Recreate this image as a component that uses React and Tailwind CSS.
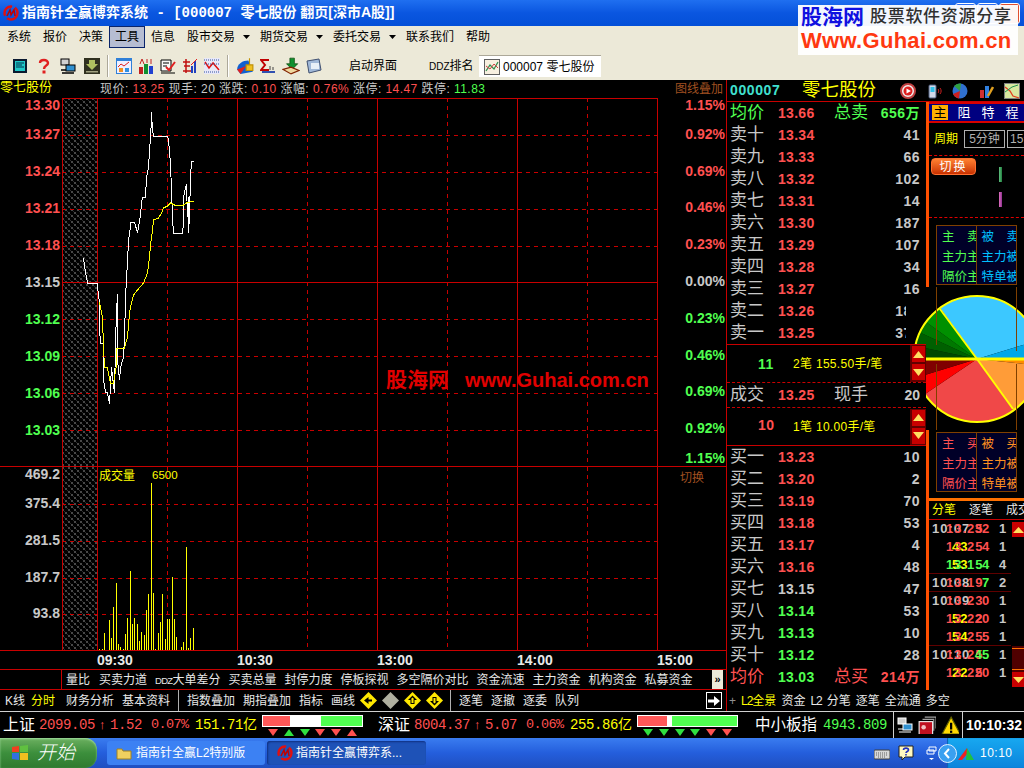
import React from 'react';

const RED = 'text-[#ff5050]';
const GREEN = 'text-[#50ff50]';
const GRAY = 'text-[#c8c8c8]';

const pricePts = [[250,505],[255,545],[260,578],[292,578],[294,625],[298,630],[298,715],[300,760],[309,760],[310,870],[315,905],[322,908],[328,942],[333,832],[338,885],[342,908],[344,760],[347,665],[350,612],[352,810],[356,870],[360,835],[368,800],[372,740],[374,630],[377,560],[381,520],[385,450],[389,410],[391,395],[403,395],[412,430],[419,375],[422,340],[425,322],[434,322],[438,265],[443,230],[447,185],[449,138],[452,90],[454,65],[457,120],[460,138],[502,138],[505,150],[508,185],[511,222],[513,300],[515,385],[518,430],[545,430],[548,400],[550,320],[555,295],[559,282],[561,380],[563,322],[565,430],[567,375],[570,265],[572,212],[578,212]];
const avgPts = [[296,635],[305,685],[310,770],[313,830],[320,835],[330,880],[340,880],[348,825],[348,775],[372,775],[380,740],[387,670],[392,640],[400,615],[410,600],[430,578],[440,550],[447,500],[450,465],[455,420],[460,390],[475,383],[482,370],[488,355],[500,348],[510,340],[522,346],[550,346],[558,338],[578,334]];
const volBars = [[298,565],[307,565],[313,516],[328,477],[334,531],[340,438],[349,366],[355,549],[361,558],[370,564],[376,519],[382,471],[391,330],[397,489],[403,471],[412,489],[418,540],[424,513],[433,522],[439,447],[445,399],[454,66],[460,396],[466,564],[475,516],[481,483],[487,399],[496,534],[502,474],[508,474],[517,348],[523,474],[529,528],[544,558],[550,543],[559,258],[565,561],[571,531],[580,501]];

const toPrice = (pts) => pts.map(([x, y]) => `${Math.round(x / 3) - 62 + 0.5},${Math.round(y / 3) + 90 - 98}`).join(' ');

const menus = [
  { t: '系统', w: 'w-[36px]' }, { t: '报价', w: 'w-[36px]' }, { t: '决策', w: 'w-[30px]' },
];
const tabs1 = ['买卖力道', 'DDZ大单差分', '买卖总量', '封停力度', '停板探视', '多空隔价对比', '资金流速', '主力资金', '机构资金', '私募资金'];
const sells = [['卖十','13.34','41'],['卖九','13.33','66'],['卖八','13.32','102'],['卖七','13.31','14'],['卖六','13.30','187'],['卖五','13.29','107'],['卖四','13.28','34'],['卖三','13.27','16'],['卖二','13.26','183'],['卖一','13.25','372']];
const buys = [['买一','13.23','10',RED],['买二','13.20','2',RED],['买三','13.19','70',RED],['买四','13.18','53',RED],['买五','13.17','4',RED],['买六','13.16','48',RED],['买七','13.15','47',GRAY],['买八','13.14','53',GREEN],['买九','13.13','10',GREEN],['买十','13.12','28',GREEN]];
const priceLabels = [['13.27',RED],['13.24',RED],['13.21',RED],['13.18',RED],['13.15',GRAY],['13.12',GREEN],['13.09',GREEN],['13.06',GREEN],['13.03',GREEN]];
const pctLabels = [['0.92%',RED],['0.69%',RED],['0.46%',RED],['0.23%',RED],['0.00%',GRAY],['0.23%',GREEN],['0.46%',GREEN],['0.69%',GREEN],['0.92%',GREEN]];
const ticks = [
  { t: '10:07', p: '13.25', v: '32', c: '1', pc: RED, vc: RED },
  { s: '43', p: '13.25', v: '4', c: '1', pc: RED, vc: RED },
  { s: '53', p: '13.15', v: '4', c: '4', pc: GREEN, vc: GREEN, line: true },
  { t: '10:08', p: '13.19', v: '7', c: '2', pc: RED, vc: GREEN, line: true },
  { t: '10:09', p: '13.23', v: '0', c: '1', pc: RED, vc: RED },
  { s: '52', p: '13.22', v: '20', c: '1', pc: RED, vc: RED },
  { s: '54', p: '13.25', v: '5', c: '1', pc: RED, vc: RED, line: true },
  { t: '10:10', p: '13.25', v: '45', c: '1', pc: RED, vc: GREEN },
  { s: '22', p: '13.25', v: '20', c: '1', pc: RED, vc: RED },
];

function Ico({ className = '', children, size = 16 }) {
  return <svg width={size} height={size} viewBox="0 0 16 16" className={`shrink-0 ${className}`}>{children}</svg>;
}

function Logo({ size = 16 }) {
  return (
    <Ico size={size}>
      <circle cx="8" cy="8" r="6.5" fill="none" stroke="#e01010" strokeWidth="2.4" strokeDasharray="14 3" />
      <path d="M4 11 L7 5 L8 10 L11 5 L12 11" fill="none" stroke="#c00000" strokeWidth="1.5" />
    </Ico>
  );
}

function MenuArrow() {
  return (
    <span className="flex w-[13px] -translate-x-[4px] items-center">
      <svg width="7" height="4" viewBox="0 0 7 4"><path d="M0 0h7L3.5 4z" fill="#000" /></svg>
    </span>
  );
}

function PlotBase({ id, h, solidY, dashY, children }) {
  return (
    <svg width="596" height={h} viewBox={`0 0 596 ${h}`} shapeRendering="crispEdges" className="block">
      <defs>
        <pattern id={id} width="6" height="6" patternUnits="userSpaceOnUse">
          <path d="M0 0h2v2H0zM3 3h2v2H3z" fill="#484848" />
          <path d="M2 2h1v1H2zM5 5h1v1H5z" fill="#2a2a2a" />
        </pattern>
      </defs>
      <rect x="0" y="0" width="35" height={h} fill={`url(#${id})`} />
      {dashY.map((y) => <line key={y} x1="0" x2="596" y1={y + 0.5} y2={y + 0.5} stroke="#c80000" strokeDasharray="4 4" />)}
      {solidY.map((y) => <line key={y} x1="0" x2="596" y1={y + 0.5} y2={y + 0.5} stroke="#c80000" />)}
      {[105, 245, 385, 525].map((x) => <line key={x} x1={x + 0.5} x2={x + 0.5} y1="0" y2={h} stroke="#c80000" strokeDasharray="4 4" />)}
      {[0, 35, 175, 315, 455, 595].map((x) => <line key={x} x1={x + 0.5} x2={x + 0.5} y1="0" y2={h} stroke="#c80000" />)}
      {children}
    </svg>
  );
}

function ArrowBtn({ up }) {
  return (
    <div className="flex h-[18px] w-[15px] items-center justify-center bg-[#c80000] border border-[#600000]">
      <svg width="11" height="7" viewBox="0 0 11 7">
        <path d={up ? 'M5.5 0L11 7H0z' : 'M0 0h11L5.5 7z'} fill="#ffe060" />
      </svg>
    </div>
  );
}

function DepthRow({ label, price, vol, labelCls = GRAY, priceCls = RED, volCls = GRAY }) {
  return (
    <div className="flex h-[22px] items-center">
      <span className={`w-[51px] pl-[3px] text-[17px] leading-[22px] ${labelCls}`}>{label}</span>
      <span className={`w-[50px] font-bold text-[14px] tracking-[0.3px] ${priceCls}`}>{price}</span>
      <span className={`ml-auto pr-[6px] font-bold text-[14px] tracking-[0.5px] ${volCls}`}>{vol}</span>
    </div>
  );
}

function FlowBox({ rows, c1, c2 }) {
  return (
    <div className="mx-[7px] grid h-[60px] w-[81px] grid-cols-2 overflow-hidden border border-[#804000] bg-[#000028] text-[12.5px] leading-[20px]">
      <div className={`overflow-hidden whitespace-nowrap border-r border-[#804000] pl-[5px] pt-[1px] ${c1}`}>
        {rows[0].map((t) => <div key={t}>{t}</div>)}
      </div>
      <div className={`overflow-hidden whitespace-nowrap pl-[5px] pt-[1px] ${c2}`}>
        {rows[1].map((t) => <div key={t}>{t}</div>)}
      </div>
    </div>
  );
}

function polar(a, r = 63) {
  const rad = (a * Math.PI) / 180;
  return `${71 + r * Math.cos(rad)},${72 + r * Math.sin(rad)}`;
}
function Slice({ a0, a1, fill }) {
  return <path d={`M71,72 L${polar(a0)} A63,63 0 ${a1 - a0 > 180 ? 1 : 0} 1 ${polar(a1)} Z`} fill={fill} />;
}

function Pie() {
  const slices = [
    [-126, -17, '#3cc8ff'], [-17, 0, '#00a8e8'], [0, 6, '#ff8c00'], [6, 54.5, '#ff9c38'],
    [54.5, 146, '#f04848'], [146, 163, '#ff0000'], [163, 180, '#800000'],
    [180, 192, '#004800'], [192, 205, '#006000'], [205, 216, '#007800'], [216, 234, '#009000'],
  ];
  return (
    <svg width="118" height="143" viewBox="0 0 118 143" className="absolute left-[179px] top-[185px] z-10">
      <defs>
        <clipPath id="pieclip"><path d="M0 9H20V0H118V143H20V58H0Z" /></clipPath>
      </defs>
      <g clipPath="url(#pieclip)">
        <rect width="118" height="143" fill="#000" />
        {slices.map(([a0, a1, f]) => <Slice key={a0} a0={a0} a1={a1} fill={f} />)}
        <circle cx="71" cy="72" r="63" fill="none" stroke="#ffff00" strokeWidth="2" />
        <line x1="71" y1="72" x2={71 - 37} y2={72 - 50} stroke="#ffff00" strokeWidth="2" />
        <line x1="71" y1="72" x2={71 + 36} y2={72 + 50} stroke="#ffff00" strokeWidth="2" />
        <rect x="20" y="70.5" width="98" height="3" fill="#ffff00" />
      </g>
      <path d="M30.5 0V58M110.5 0V64M30.5 77V143M110.5 77V143" stroke="#804000" fill="none" />
    </svg>
  );
}

function Tick({ t, s, p, v, c, pc, vc, line }) {
  return (
    <div className={`grid h-[18px] text-[13px] leading-[17px] font-bold ${line ? 'border-b border-[#600000]' : ''}`}>
      {t && <span className={`col-start-1 row-start-1 ml-[3px] tracking-[1px] ${GRAY}`}>{t}</span>}
      {s && <span className="col-start-1 row-start-1 ml-[23px] tracking-[1px] text-[#ffff00]">{s}</span>}
      <span className={`col-start-1 row-start-1 ml-[17px] tracking-[1px] ${pc}`}>{p}</span>
      <span className={`col-start-1 row-start-1 mr-[22px] justify-self-end ${vc}`}>{v}</span>
      <span className={`col-start-1 row-start-1 mr-[5px] justify-self-end ${GRAY}`}>{c}</span>
    </div>
  );
}

function Diamond({ fill = '#ffe800', dir }) {
  return (
    <svg width="17" height="17" viewBox="0 0 17 17" className="shrink-0">
      <path d="M8.5 0L17 8.5L8.5 17L0 8.5Z" fill={fill} />
      {dir === 'left' && <path d="M4 8.5L8.5 5V7.5H12V9.5H8.5V12Z" fill="#000" />}
      {dir === 'up' && <path d="M8.5 3.5L13 8H10.5V12H6.5V8H4ZM8.5 5.5L6.8 7.2H7.5V11H9.5V7.2H10.2Z" fill="#000" />}
      {dir === 'down' && <path d="M8.5 13.5L13 9H10.5V5H6.5V9H4ZM8.5 11.5L6.8 9.8H7.5V6H9.5V9.8H10.2Z" fill="#000" />}
    </svg>
  );
}

function Tri({ up, color }) {
  return (
    <svg width="10" height="7" viewBox="0 0 10 7">
      <path d={up ? 'M5 0L10 7H0z' : 'M0 0h10L5 7z'} fill={color} />
    </svg>
  );
}

function IndexBar({ red, white, green, tris, className = '' }) {
  return (
    <div className={`flex w-[101px] flex-col ${className}`}>
      <div className="flex h-[12px] border border-white bg-white">
        <div className="bg-[#ff5858]" style={{ width: red }} />
        <div style={{ width: white }} />
        <div className="bg-[#50ff50]" style={{ width: green }} />
      </div>
      <div className="mt-[2px] flex justify-between px-[6px]">
        {tris.map((x, i) => <Tri key={i} up={x[0] === 'u'} color={x[1] === 'r' ? '#ff5050' : '#30e040'} />)}
      </div>
    </div>
  );
}

function IndexStat({ name, val, chg, pct, amt, nameW }) {
  return (
    <div className="flex h-full items-center">
      <span className={`text-[16px] text-white ${nameW}`}>{name}</span>
      <span className={`ml-[5px] w-[56px] font-['Liberation_Mono'] text-[14px] tracking-[-0.4px] ${RED}`}>{val}</span>
      <span className={`ml-[4px] w-[8px] text-[13px] ${RED}`}>↑</span>
      <span className={`ml-[3px] w-[33px] font-['Liberation_Mono'] text-[14px] tracking-[-0.4px] ${RED}`}>{chg}</span>
      <span className={`ml-[8px] w-[40px] font-['Liberation_Mono'] text-[13.5px] tracking-[-0.6px] ${RED}`}>{pct}</span>
      <span className="ml-[4px] w-[64px] whitespace-nowrap text-[14px] text-[#ffff00]"><span className="font-['Liberation_Mono'] tracking-[-0.4px]">{amt}</span>亿</span>
    </div>
  );
}

export default function App() {
  return (
    <div className="relative flex h-[768px] w-[1024px] flex-col overflow-hidden bg-black font-['Liberation_Sans','Noto_Sans_CJK_SC',sans-serif]">
      {/* title */}
      <div className="flex h-[26px] items-center bg-gradient-to-b from-[#1f6ff0] via-[#0a56e0] to-[#0450d8] pl-[3px]">
        <Logo size={16} />
        <span className="ml-[3px] whitespace-pre text-[14px] font-bold text-white">
          指南针全赢博弈系统<span className="font-['Liberation_Mono']"> - [000007 </span>零七股份 翻页[深市A股]]
        </span>
        <div className="ml-auto mr-[4px] flex gap-[1px]">
          <div className="h-[21px] w-[21px] rounded-[3px] border border-white bg-[#2a6cf0]" />
          <div className="h-[21px] w-[21px] rounded-[3px] border border-white bg-[#2a6cf0]" />
          <div className="h-[21px] w-[21px] rounded-[3px] border border-white bg-[#e05030]" />
        </div>
      </div>

      {/* menu */}
      <div className="flex h-[26px] items-start bg-[#ece9d8] pl-[7px] text-[12px] leading-[22px] text-black">
        {menus.map((m) => <span key={m.t} className={m.w}>{m.t}</span>)}
        <span className="flex h-[22px] w-[36px] items-center justify-center border border-[#0a246a] bg-[#b6bdd2]">工具</span>
        <span className="ml-[6px] w-[36px]">信息</span>
        <span className="w-[60px]">股市交易</span>
        <div className="flex h-[22px]"><MenuArrow /></div>
        <span className="w-[60px]">期货交易</span>
        <div className="flex h-[22px]"><MenuArrow /></div>
        <span className="w-[60px]">委托交易</span>
        <div className="flex h-[22px]"><MenuArrow /></div>
        <span className="w-[60px]">联系我们</span>
        <span>帮助</span>
      </div>

      {/* toolbar */}
      <div className="flex h-[28px] items-center gap-[6px] bg-[#ece9d8] pl-[12px] text-[12px] text-black">
        <Ico><rect x="1" y="1" width="14" height="14" fill="#0a1a30" /><rect x="3" y="3" width="10" height="10" fill="#20c8c8" /><path d="M4 5h8M4 7h6M4 9h8" stroke="#003050" /></Ico>
        <Ico className="ml-[2px]"><path d="M4 5C4 1 12 1 12 5C12 8 8 7 8 11" fill="none" stroke="#e02020" strokeWidth="2.4" /><rect x="6.5" y="12.5" width="3" height="3" fill="#e02020" /></Ico>
        <Ico className="ml-[2px]"><rect x="1" y="1" width="8" height="6" fill="#d0d0d0" stroke="#000" /><rect x="6" y="7" width="9" height="6" fill="#3090d0" stroke="#000" /><path d="M1 12h5M2 15h12" stroke="#000" strokeWidth="1.5" /></Ico>
        <Ico className="ml-[2px]"><rect width="16" height="16" fill="#303020" /><path d="M5 2h6v4h3L8 12L2 6h3z" fill="#b0c060" /><rect x="2" y="13" width="12" height="1.5" fill="#a0a080" /></Ico>
        <div className="mx-[1px] h-[22px] w-[2px] border-l border-[#aca899] bg-white" />
        <Ico><rect width="16" height="16" fill="#3080d8" /><rect x="1" y="3" width="14" height="12" fill="#f0f0ff" /><path d="M2 9L5 6L8 8L13 4" fill="none" stroke="#e02020" /><rect x="3" y="10" width="4" height="4" fill="#f09020" /><rect x="9" y="10" width="4" height="4" fill="#3090e0" /></Ico>
        <Ico><rect x="1" y="9" width="4" height="7" fill="#c02020" /><rect x="6" y="6" width="4" height="10" fill="#109030" /><rect x="11" y="8" width="4" height="8" fill="#2040d0" /><path d="M2 6L4 1L6 6M9 1v4M13 1v5" fill="none" stroke="#c02020" /></Ico>
        <Ico><path d="M1 2h10v11H1z" fill="#f8f8f8" stroke="#000" /><path d="M3 5h6M3 8h4M1 15h14" stroke="#000" /><path d="M6 9L9 12L15 4" fill="none" stroke="#e02020" strokeWidth="2" /></Ico>
        <Ico><path d="M1 4h7M2 8h6M1 13h8M4 1v14" stroke="#c01010" strokeWidth="1.5" /><path d="M10 15V8M13 15V3" stroke="#2040c0" strokeWidth="2" /><path d="M9 7L15 1" stroke="#e02020" /></Ico>
        <Ico><rect width="16" height="16" fill="#e8e8f8" /><path d="M1 4L5 10L9 5L15 12" fill="none" stroke="#e01010" strokeWidth="1.5" /><path d="M0 2h16M0 6h16M0 14h16" stroke="#3050a0" strokeDasharray="1 1" /></Ico>
        <div className="mx-[1px] h-[22px] w-[2px] border-l border-[#aca899] bg-white" />
        <Ico size={18}><path d="M1 11C1 6 6 3 11 3L15 13L4 15Z" fill="#1060d0" /><path d="M1 11L9 8L4 15Z" fill="#e02020" /><path d="M12 1v6M9 7h6v5H9z" stroke="#c09000" fill="#f0c020" /></Ico>
        <Ico><path d="M9 2H1L5 7L1 12H9" fill="none" stroke="#c00000" strokeWidth="2" /><path d="M2 14h13" stroke="#3050b0" strokeWidth="2" /><path d="M10 8v4M13 9v3" stroke="#404040" /></Ico>
        <Ico size={18}><path d="M7 1h4v5h3L9 11L4 6h3z" fill="#109030" stroke="#004000" strokeWidth=".6" /><path d="M1 11L8 9L15 12L8 15Z" fill="#f0d8a0" stroke="#802000" /></Ico>
        <Ico><path d="M1 3L13 1L15 12L3 15Z" fill="#a0b8d8" stroke="#405070" /><rect x="5" y="5" width="8" height="6" fill="#e8f0f8" /></Ico>
        <span className="ml-[21px] w-[74px]">启动界面</span>
        <span className="w-[44px] whitespace-nowrap"><span className="text-[10px]">DDZ</span>排名</span>
        <div className="flex h-[22px] w-[122px] items-center gap-[3px] border-t border-[#aca899] bg-white pl-[5px]">
          <Ico><rect x=".5" y=".5" width="15" height="15" fill="#f8f0e0" stroke="#606060" /><path d="M2 12L6 6L10 10L14 3" fill="none" stroke="#309050" strokeWidth="1.3" /><path d="M2 7L6 10L10 5L14 9" fill="none" stroke="#d04040" /></Ico>
          <span className="whitespace-pre">000007 零七股份</span>
        </div>
      </div>

      {/* main */}
      <div className="flex h-[610px]">
        {/* left charts */}
        <div className="flex w-[727px] flex-col border-r border-[#c80000]">
          <div className="flex h-[18px] items-center text-[12px] leading-none whitespace-pre tracking-[0.45px]">
            <span className="w-[100px] -translate-y-[3px] text-[13px] tracking-normal text-[#ffff00]">零七股份</span>
            <span className={GRAY}>现价: </span><span className={RED}>13.25 </span>
            <span className={GRAY}>现手: 20 涨跌: </span><span className={RED}>0.10 </span>
            <span className={GRAY}>涨幅: </span><span className={RED}>0.76% </span>
            <span className={GRAY}>涨停: </span><span className={RED}>14.47 </span>
            <span className={GRAY}>跌停: </span><span className={GREEN}>11.83</span>
            <span className="ml-auto pr-[3px] text-[12px] tracking-normal text-[#a05020]">图线叠加</span>
          </div>

          {/* price */}
          <div className="flex h-[369px] border-b border-[#c80000]">
            <div className="flex w-[62px] flex-col items-end pr-[2px] text-[14px] font-bold">
              <div className={`mb-[4px] flex h-[14px] items-center ${RED}`}>13.30</div>
              {priceLabels.map(([t, c]) => <div key={t} className={`flex h-[37px] items-center ${c}`}>{t}</div>)}
            </div>
            <div className="relative">
              <PlotBase id="hp" h={368} solidY={[0, 184]} dashY={[37, 74, 111, 148, 221, 258, 295, 332]}>
                <polyline points={toPrice(pricePts)} fill="none" stroke="#fff" />
                <polyline points={toPrice(avgPts)} fill="none" stroke="#ffff00" />
              </PlotBase>
              <div className="absolute left-[324px] top-[266px] flex items-center font-bold text-[#e00000]">
                <span className="w-[79px] text-[21px]">股海网</span>
                <span className="text-[20px]">www.Guhai.com.cn</span>
              </div>
            </div>
            <div className="flex flex-1 flex-col items-end pr-[1px] text-[14px] font-bold">
              <div className={`mb-[3px] flex h-[15px] items-center ${RED}`}>1.15%</div>
              {pctLabels.map(([t, c], i) => <div key={i} className={`flex h-[37px] items-center ${c}`}>{t}</div>)}
              <div className={`mt-[4px] flex h-[15px] items-center ${GREEN}`}>1.15%</div>
            </div>
          </div>

          {/* volume */}
          <div className="flex h-[184px] border-b border-[#c80000]">
            <div className={`flex w-[62px] flex-col items-end pr-[2px] text-[14px] font-bold ${GRAY}`}>
              <div className="mb-[3px] flex h-[15px] items-center">469.2</div>
              <div className="flex h-[37px] items-center">375.4</div>
              <div className="flex h-[37px] items-center">281.5</div>
              <div className="flex h-[36px] items-center">187.7</div>
              <div className="flex h-[36px] items-center">93.8</div>
            </div>
            <div className="relative">
              <PlotBase id="hv" h={183} solidY={[]} dashY={[37, 74, 111, 147]}>
                {volBars.map(([x, y]) => (
                  <line key={x} x1={Math.round(x / 3) - 62 + 0.5} x2={Math.round(x / 3) - 62 + 0.5} y1={183} y2={Math.round(y / 3) - 6} stroke="#ffff00" />
                ))}
              </PlotBase>
              <div className="absolute left-[37px] top-[0px] flex items-center text-[12px] text-[#ffff00]">
                <span className="w-[53px]">成交量</span><span className="text-[11.5px]">6500</span>
              </div>
            </div>
            <div className="flex-1 pl-[22px] pt-[2px] text-[12px] text-[#a05020]">切换</div>
          </div>

          {/* time axis */}
          <div className="flex h-[18px] items-center text-[14px] font-bold text-[#e8e8e8]">
            <span className="ml-[97px] w-[140px]">09:30</span>
            <span className="w-[140px]">10:30</span>
            <span className="w-[140px]">13:00</span>
            <span className="w-[140px]">14:00</span>
            <span>15:00</span>
          </div>

          {/* tabs */}
          <div className="flex h-[21px] items-center border-y border-[#c80000] text-[12px] leading-none text-[#e8e8e8]">
            <div className="h-full w-[62px] border-r border-[#c80000]" />
            <span className="ml-[4px] w-[33px]">量比</span>
            <div className="flex gap-[8px] whitespace-nowrap">
              {tabs1.map((t) => (
                <span key={t}>
                  {t.startsWith('DDZ') ? <><span className="text-[9.5px] tracking-[-0.7px]">DDZ</span>{t.slice(3)}</> : t}
                </span>
              ))}
            </div>
            <div className="ml-auto mr-[3px] flex h-[19px] w-[11px] items-center justify-center bg-[#ece9d8] text-[11px] font-bold text-black">»</div>
          </div>
        </div>

        {/* right panel */}
        <div className="flex w-[297px] flex-col">
          <div className="flex h-[22px] items-center border-b border-[#c80000]">
            <span className="w-[75px] pl-[3px] font-bold text-[14px] tracking-[0.6px] text-[#40e0d0]">000007</span>
            <span className="w-[98px] text-[18.5px] leading-none text-[#ffff00]">零七股份</span>
            <div className="flex items-center gap-[10px]">
              <Ico><circle cx="8" cy="8" r="7" fill="#f0f0f0" stroke="#c04040" strokeWidth="2" /><circle cx="8" cy="8" r="4.5" fill="#e02020" /><path d="M6.5 5.5L11 8L6.5 10.5z" fill="#fff" /></Ico>
              <Ico><rect x="3" y="2" width="7" height="13" rx="1" fill="#d0d8e8" stroke="#506080" /><rect x="4.5" y="4" width="4" height="5" fill="#30c0e8" /><path d="M12 6C13 7 13 9 12 10M14 5C15.5 7 15.5 9 14 11" fill="none" stroke="#d02020" /></Ico>
              <Ico><circle cx="8" cy="8" r="7.5" fill="#3070d0" /><path d="M8 8L2 3A8 8 0 0 1 9 .5Z" fill="#30a040" /><path d="M8 8L1 11A8 8 0 0 0 7 15.5Z" fill="#d02020" /></Ico>
              <Ico><rect x="2" y="7" width="4" height="8" fill="#d03030" /><rect x="7" y="3" width="4" height="12" fill="#3080e0" /><path d="M10 13L15 4" stroke="#e0a020" strokeWidth="2.5" /></Ico>
              <Ico><rect x=".5" y=".5" width="15" height="15" fill="#d8e8a0" stroke="#808080" /><path d="M1 4L6 8L9 13L15 15" fill="none" stroke="#e04020" strokeWidth="1.3" /><path d="M1 9L8 4L14 2" fill="none" stroke="#209050" /></Ico>
            </div>
          </div>

          <div className="relative flex flex-1">
            {/* depth list */}
            <div className="flex w-[199px] flex-col">
              <DepthRow label="均价" price="13.66" vol="656万" labelCls={GREEN} volCls={GREEN} />
              <div className="-mt-[22px] h-[22px] pl-[107px] text-[17px] leading-[22px] text-[#50ff50]">总卖</div>
              {sells.map(([l, p, v]) => <DepthRow key={l} label={l} price={p} vol={v} />)}
              <div className="relative z-20 flex h-[38px] items-center justify-between border-t border-[#c80000]">
                <div className="flex items-center text-[12px] tracking-[0.3px] text-[#ffff00]">
                  <span className={`w-[66px] pl-[31px] pt-[1px] font-bold text-[14px] tracking-[0.5px] ${GREEN}`}>11</span>
                  <span>2笔 155.50手/笔</span>
                </div>
                <div className="flex flex-col self-end bg-[#600000] pb-[1px] pl-[1px]"><ArrowBtn up /><ArrowBtn /></div>
              </div>
              <div className="flex h-[26px] items-center border-y border-dashed border-[#c80000]">
                <span className={`w-[51px] pl-[3px] text-[17px] ${GRAY}`}>成交</span>
                <span className={`w-[56px] font-bold text-[14px] tracking-[0.3px] ${RED}`}>13.25</span>
                <span className={`text-[17px] ${GRAY}`}>现手</span>
                <span className={`ml-auto pr-[6px] font-bold text-[14px] ${GRAY}`}>20</span>
              </div>
              <div className="relative z-20 flex h-[38px] items-center justify-between border-b border-[#c80000]">
                <div className="flex items-center text-[12px] tracking-[0.3px] text-[#ffff00]">
                  <span className={`w-[66px] pl-[31px] pb-[3px] font-bold text-[14px] tracking-[0.5px] ${RED}`}>10</span>
                  <span>1笔 10.00手/笔</span>
                </div>
                <div className="flex flex-col bg-[#600000] pl-[1px]"><ArrowBtn up /><ArrowBtn /></div>
              </div>
              {buys.map(([l, p, v, c]) => <DepthRow key={l} label={l} price={p} vol={v} priceCls={c} />)}
              <DepthRow label="均价" price="13.03" vol="214万" labelCls={RED} priceCls={GREEN} volCls={RED} />
              <div className="-mt-[22px] h-[22px] pl-[107px] text-[17px] leading-[22px] text-[#ff5050]">总买</div>
            </div>

            {/* side column */}
            <div className="flex w-[98px] flex-col border-l-[3px] border-[#ff5000]">
              <div className="flex h-[21px] items-center gap-[8px] border-y-2 border-[#d80000] bg-[#000080] pl-[3px] text-[13px] text-white">
                <span className="flex h-[15px] w-[16px] items-center justify-center bg-[#ffb000] text-black">主</span>
                <span className="w-[16px] text-center">阻</span>
                <span className="w-[16px] text-center">特</span>
                <span className="w-[16px] text-center">程</span>
              </div>
              <div className="flex h-[33px] items-center overflow-hidden whitespace-nowrap border-b border-dashed border-[#e00000] pl-[5px] text-[12px]">
                <span className="w-[30px] shrink-0 text-[#ffff00]">周期</span>
                <span className="flex h-[18px] w-[41px] shrink-0 items-center justify-center border border-[#b0b0b0] text-[#b0b0b0]">5分钟</span>
                <span className="ml-[2px] flex h-[18px] w-[41px] shrink-0 items-center border border-[#b0b0b0] pl-[2px] text-[#b0b0b0]">15分钟</span>
              </div>
              <div className="flex h-[62px] border-b border-dashed border-[#e00000]">
                <span className="ml-[2px] mt-[2px] flex h-[17px] w-[45px] items-center justify-center rounded-[4px] border border-[#ff7030] bg-gradient-to-b from-[#ff8030] to-[#c83000] text-[12px] tracking-[2px] text-white">切换</span>
                <div className="ml-[23px] flex flex-col gap-[10px] pt-[11px]">
                  <div className="h-[15px] w-[3px] bg-gradient-to-r from-[#60c080] to-[#208040]" />
                  <div className="h-[15px] w-[3px] bg-gradient-to-r from-[#e070c0] to-[#903090]" />
                </div>
              </div>
              <div className="pt-[7px]">
                <FlowBox rows={[['主　卖', '主力主', '隔价主'], ['被　卖', '主力被', '特单被']]} c1={GREEN} c2="text-[#00c0ff]" />
              </div>
              <div className="mt-[147px]">
                <FlowBox rows={[['主　买', '主力主', '隔价主'], ['被　买', '主力被', '特单被']]} c1={RED} c2="text-[#ff9020]" />
              </div>
              <div className="mt-[6px] h-[3px] bg-[#ff7000]" />
              <div className="flex h-[18px] items-center gap-[13px] pl-[3px] text-[12px] whitespace-nowrap overflow-hidden">
                <span className="text-[#ffff00]">分笔</span>
                <span className="text-[#e8e8e8]">逐笔</span>
                <span className="text-[#e8e8e8]">成交</span>
              </div>
              <div className="flex flex-1 border-t border-[#c80000]">
                <div className="w-[83px]">
                  {ticks.map((r, i) => <Tick key={i} {...r} />)}
                </div>
                <div className="ml-[1px] flex w-[12px] flex-col pb-[2px] pt-[2px]">
                  <div className="flex h-[15px] items-center justify-center bg-[#c80000]">
                    <svg width="11" height="6" viewBox="0 0 11 6"><path d="M5.5 0L11 6H0z" fill="#ffe060" /></svg>
                  </div>
                  <div className="mt-auto flex h-[26px] flex-col justify-between bg-[#500000] py-[2px]">
                    <div className="h-px bg-[#ff7000]" />
                    <div className="h-px bg-[#ff7000]" />
                  </div>
                  <div className="mb-[1px] flex h-[15px] items-center justify-center bg-[#c80000]">
                    <svg width="11" height="6" viewBox="0 0 11 6"><path d="M0 0h11L5.5 6z" fill="#ffe060" /></svg>
                  </div>
                </div>
              </div>
            </div>

            <Pie />
          </div>
        </div>
      </div>

      {/* lower tab row */}
      <div className="flex h-[22px] items-center border-b border-[#d0d0d0] text-[12px] leading-none whitespace-nowrap text-[#e8e8e8]">
        <div className="flex h-full w-[727px] items-center border-r border-[#c80000] pl-[5px]">
          <span className="w-[26px]">K线</span>
          <span className="w-[35px] text-[#ffff00]">分时</span>
          <span className="w-[56px]">财务分析</span>
          <span className="w-[56px]">基本资料</span>
          <div className="h-full w-[9px] border-l border-[#b0b0b0]" />
          <span className="w-[56px]">指数叠加</span>
          <span className="w-[56px]">期指叠加</span>
          <span className="w-[32px]">指标</span>
          <span className="w-[29px]">画线</span>
          <div className="flex items-center gap-[5px]">
            <Diamond dir="left" />
            <Diamond fill="#b0b0a0" />
            <Diamond dir="up" />
            <Diamond dir="down" />
          </div>
          <div className="ml-[7px] h-full w-[9px] border-l border-[#b0b0b0]" />
          <span className="w-[32px]">逐笔</span>
          <span className="w-[32px]">逐撤</span>
          <span className="w-[32px]">逐委</span>
          <span>队列</span>
          <div className="ml-auto mr-[4px] flex h-[17px] w-[16px] items-center justify-center border border-white">
            <svg width="12" height="10" viewBox="0 0 12 10"><path d="M0 3.5H6V0L12 5L6 10V6.5H0Z" fill="#fff" /></svg>
          </div>
        </div>
        <div className="flex items-center gap-[5px] pl-[2px]">
          <span className="w-[7px] text-[#909090]">+</span>
          <span className="text-[#ffff00]"><span className="tracking-[-1px]">L2</span>全景</span>
          <span>资金</span><span className="tracking-[-1px]">L2</span><span>分笔</span><span>逐笔</span><span>全流通</span><span>多空</span>
        </div>
      </div>

      {/* index ticker */}
      <div className="flex h-[26px] items-center whitespace-nowrap pl-[3px]">
        <IndexStat name="上证" val="2099.05" chg="1.52" pct="0.07%" amt="151.71" nameW="w-[31px]" />
        <IndexBar className="ml-[3px]" red={27} white={31} green={41} tris={['dr', 'ug', 'dg', 'dr', 'dr', 'ur']} />
        <div className="ml-[15px]">
          <IndexStat name="深证" val="8004.37" chg="5.07" pct="0.06%" amt="255.86" nameW="w-[31px]" />
        </div>
        <IndexBar className="ml-[3px]" red={29} white={5} green={65} tris={['dg', 'dg', 'dg', 'dg', 'dr', 'dr']} />
        <span className="ml-[17px] w-[68px] text-[15.5px] text-white">中小板指</span>
        <span className={`w-[70px] font-['Liberation_Mono'] text-[14px] tracking-[-0.4px] ${GREEN}`}>4943.809</span>
        <div className="flex h-full items-center gap-[5px] border-x border-[#d0d0d0] px-[3px]">
          <Ico><rect x="1" y="1" width="8" height="6" fill="#d0d0d0" stroke="#fff" /><rect x="6" y="7" width="9" height="6" fill="#3090d0" stroke="#fff" /><path d="M1 12h5M2 15h12" stroke="#fff" /></Ico>
          <Ico size={18}><path d="M6 1h10v10" fill="none" stroke="#a0a0a0" /><path d="M4 3h10v10" fill="none" stroke="#a0a0a0" /><rect x="1" y="5" width="12" height="12" fill="#c01020" stroke="#f0f0f0" /><circle cx="5" cy="10" r="2" fill="#f0c0c0" /></Ico>
          <Ico size={18}><path d="M9 1L17 16H1Z" fill="#ffd800" stroke="#606000" /><rect x="8" y="6" width="2" height="6" fill="#000" /><rect x="8" y="13" width="2" height="2" fill="#000" /></Ico>
        </div>
        <span className="ml-[3px] font-bold text-[14px] text-white">10:10:32</span>
      </div>

      {/* taskbar */}
      <div className="flex h-[30px] items-center bg-gradient-to-b from-[#3a7cf0] via-[#245edc] to-[#1f4fc0] text-[12px] text-white">
        <div className="flex h-full w-[97px] items-center rounded-r-[12px] bg-gradient-to-b from-[#6cb060] via-[#3c8f3c] to-[#2f7a2f] pl-[10px] shadow-[inset_0_1px_2px_#9fdc9f]">
          <svg width="20" height="20" viewBox="0 0 20 20">
            <path d="M2 4L9 3V9H2Z" fill="#f04020" /><path d="M10 3L18 2V9H10Z" fill="#60c040" />
            <path d="M2 10H9V17L2 16Z" fill="#3070e0" /><path d="M10 10H18V17L10 17Z" fill="#f0c020" />
          </svg>
          <span className="ml-[7px] text-[19px] font-light italic text-white">开始</span>
        </div>
        <div className="ml-[10px] flex h-[24px] w-[158px] items-center gap-[4px] rounded-[3px] bg-[#3c81f3] pl-[9px]">
          <Ico><path d="M1 4h5l1 2h8v8H1z" fill="#f0d060" stroke="#a08020" /></Ico>
          <span>指南针全赢L2特别版</span>
        </div>
        <div className="ml-[2px] flex h-[24px] w-[159px] items-center gap-[3px] rounded-[3px] bg-[#1e52b7] pl-[10px] shadow-[inset_1px_1px_2px_#103080]">
          <Logo />
          <span>指南针全赢博弈系...</span>
        </div>
        <div className="ml-auto mr-[7px] flex items-center gap-[8px]">
          <Ico><rect x="0" y="5" width="16" height="9" rx="1" fill="#d8d8d8" stroke="#404040" /><path d="M2 8h12M2 10h12M4 12h8" stroke="#606060" strokeDasharray="1 1" /></Ico>
          <Ico><path d="M1 1h14v11H7l-3 3v-3H1z" fill="#fff8c0" stroke="#202020" /><path d="M5.5 5C5.5 2.5 10.5 2.5 10.5 5C10.5 6.5 8 6.5 8 8M8 9v1.5" fill="none" stroke="#2030c0" strokeWidth="1.6" /></Ico>
          <Ico className="ml-[2px]"><path d="M5 2h7v4H5zM3 5h7v4H3z" fill="none" stroke="#fff" /><path d="M5 13h5L7.5 15z" fill="#fff" /></Ico>
        </div>
        <div className="flex h-full w-[77px] items-center bg-gradient-to-b from-[#18a8f0] to-[#0c84dc] shadow-[inset_1px_0_1px_#0a60b0]">
          <svg width="19" height="19" viewBox="0 0 19 19" className="-ml-[9px] shrink-0"><circle cx="9.5" cy="9.5" r="9" fill="#3aa0f0" stroke="#e0f0ff" /><path d="M11 5L7 9.5L11 14" fill="none" stroke="#fff" strokeWidth="2" /></svg>
          <svg width="16" height="14" viewBox="0 0 16 14" className="ml-[1px] shrink-0"><path d="M0 14L9 2L10 7L4 14Z" fill="#f02020" /><path d="M9 2L16 14H8Z" fill="#20c040" /></svg>
          <span className="ml-[6px] tracking-[0.5px]">10:10</span>
        </div>
      </div>

      {/* watermark over title bar */}
      <div className="absolute left-[798px] top-[5px] flex h-[50px] w-[220px] flex-col bg-white/95 pl-[3px]">
        <div className="flex h-[23px] items-center">
          <span className="w-[66px] text-[21px] font-bold leading-none text-[#1010e0]">股海网</span>
          <span className="ml-[3px] whitespace-nowrap text-[17px] leading-none font-medium tracking-[0.7px] text-[#303030]">股票软件资源分享</span>
        </div>
        <span className="whitespace-nowrap text-[22px] font-bold leading-[25px] tracking-[0.3px] text-[#ff3810]">Www.Guhai.com.cn</span>
      </div>
    </div>
  );
}
